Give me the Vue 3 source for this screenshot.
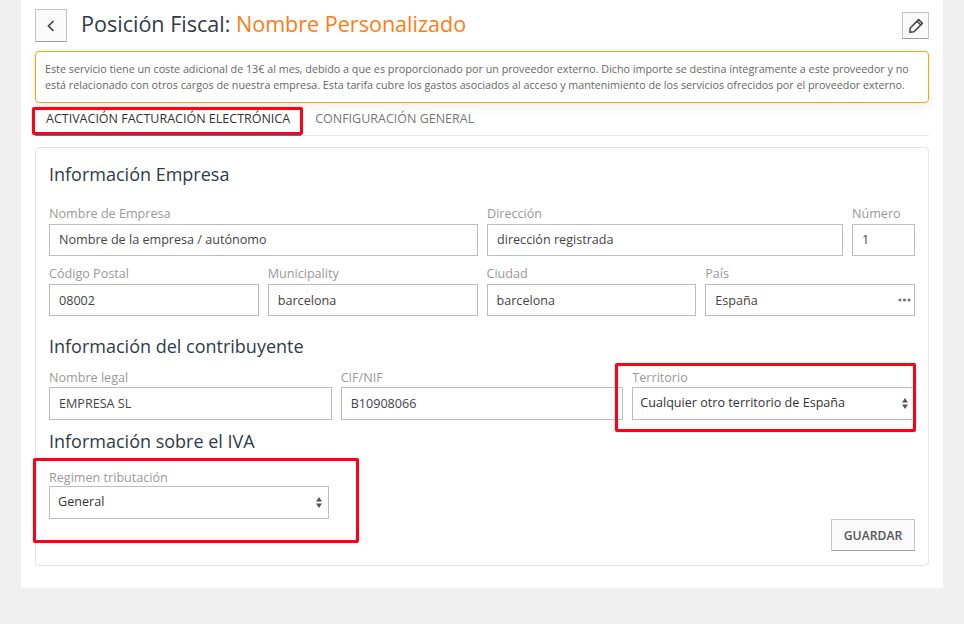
<script setup>
const rows = [
  { cls: 'r1', fields: [
    { label: 'Nombre de Empresa', value: 'Nombre de la empresa / autónomo' },
    { label: 'Dirección', value: 'dirección registrada' },
    { label: 'Número', value: '1' },
  ]},
  { cls: 'r2', fields: [
    { label: 'Código Postal', value: '08002' },
    { label: 'Municipality', value: 'barcelona' },
    { label: 'Ciudad', value: 'barcelona' },
    { label: 'País', value: 'España', dots: true },
  ]},
]
</script>

<template>
  <div class="page">
    <main class="panel">
      <header class="head">
        <button class="btn back" aria-label="Volver">
          <svg width="10" height="14" viewBox="0 0 10 14"><path d="M7.5 2 L2.5 7 L7.5 12" fill="none" stroke="#444" stroke-width="1.7"/></svg>
        </button>
        <h1 class="title">Posición Fiscal: <span class="orange">Nombre Personalizado</span></h1>
        <button class="btn edit" aria-label="Editar">
          <svg width="16" height="16" viewBox="0 0 16 16"><path d="M10.6 1.6 L14.4 5.4 L6 13.8 L1.8 14.2 L2.2 10 Z M9 3.2 L12.8 7" fill="none" stroke="#444" stroke-width="1.5" stroke-linejoin="round"/></svg>
        </button>
      </header>

      <div class="alert">
        Este servicio tiene un coste adicional de 13€ al mes, debido a que es proporcionado por un proveedor externo. Dicho importe se destina íntegramente a este proveedor y no está relacionado con otros cargos de nuestra empresa. Esta tarifa cubre los gastos asociados al acceso y mantenimiento de los servicios ofrecidos por el proveedor externo.
      </div>

      <nav class="tabs">
        <div class="tab active">ACTIVACIÓN FACTURACIÓN ELECTRÓNICA</div>
        <div class="tab">CONFIGURACIÓN GENERAL</div>
        <span class="mark mark-tab"></span>
      </nav>

      <section class="card">
        <h2 class="h first">Información Empresa</h2>
        <div v-for="row in rows" :key="row.cls" class="grid" :class="row.cls">
          <div v-for="f in row.fields" :key="f.label" class="field">
            <label class="lab">{{ f.label }}</label>
            <div class="input">
              <span>{{ f.value }}</span>
              <svg v-if="f.dots" class="dots" width="13" height="4" viewBox="0 0 13 4"><circle cx="2" cy="2" r="1.6" fill="#777"/><circle cx="6.5" cy="2" r="1.6" fill="#777"/><circle cx="11" cy="2" r="1.6" fill="#777"/></svg>
            </div>
          </div>
        </div>

        <h2 class="h second">Información del contribuyente</h2>
        <div class="grid r3">
          <div class="field">
            <label class="lab">Nombre legal</label>
            <div class="input"><span>EMPRESA SL</span></div>
          </div>
          <div class="field">
            <label class="lab">CIF/NIF</label>
            <div class="input"><span>B10908066</span></div>
          </div>
          <div class="field">
            <label class="lab">Territorio</label>
            <div class="input select">
              <span>Cualquier otro territorio de España</span>
              <svg width="6" height="11" viewBox="0 0 6 11"><path d="M3 0 L6 4.5 L0 4.5 Z M3 11 L0 6.5 L6 6.5 Z" fill="#555"/></svg>
            </div>
            <span class="mark mark-terr"></span>
          </div>
        </div>

        <h2 class="h third">Información sobre el IVA</h2>
        <div class="iva field">
          <label class="lab">Regimen tributación</label>
          <div class="input select">
            <span>General</span>
            <svg width="6" height="11" viewBox="0 0 6 11"><path d="M3 0 L6 4.5 L0 4.5 Z M3 11 L0 6.5 L6 6.5 Z" fill="#555"/></svg>
          </div>
          <span class="mark mark-iva"></span>
        </div>

        <div class="actions">
          <button class="btn save">GUARDAR</button>
        </div>
      </section>
    </main>
  </div>
</template>

<style>
html, body { margin: 0; background: #f0f0f0; }
</style>

<style scoped>
.page {
  height: 624px;
  overflow: hidden;
  background: #f0f0f0;
  font-family: "Open Sans", "Liberation Sans", sans-serif;
  color: #333;
}
.panel {
  width: 922px;
  height: 588px;
  margin-left: 21px;
  padding: 0 14px;
  box-sizing: border-box;
  background: #fff;
}
.head {
  height: 51px;
  display: flex;
  align-items: center;
}
.btn {
  display: flex;
  align-items: center;
  justify-content: center;
  padding: 0;
  box-sizing: border-box;
  background: #fafafa;
  border: 1px solid #c4c4c8;
  border-bottom-color: #9a9aa0;
  border-radius: 1px;
  font-family: inherit;
}
.back { width: 32px; height: 33px; }
.edit { width: 27px; height: 27px; margin-left: auto; margin-right: 0; }
.title {
  margin: 0 0 3px 14px;
  font-size: 21.55px;
  font-weight: 400;
  line-height: 28px;
  color: #2f3b48;
}
.orange { color: #ff7c14; }
.alert {
  box-sizing: border-box;
  height: 52px;
  padding: 9px 9px 0;
  border: 1px solid #ffa500;
  border-radius: 4px;
  background: #fff;
  box-shadow: 0 4px 12px rgba(0, 0, 0, .07);
  font-size: 10.76px;
  line-height: 16px;
  color: #666;
}
.tabs {
  position: relative;
  display: flex;
  height: 33px;
  box-sizing: border-box;
  border-bottom: 1px solid #e4e4e4;
}
.tab {
  padding: 7px 11px 0;
  height: 33px;
  box-sizing: border-box;
  font-size: 12.5px;
  line-height: 18px;
  color: #777;
  white-space: nowrap;
}
.tab.active {
  color: #333;
  border-bottom: 1px solid #2f7fd8;
}
.tab + .tab { margin-left: 3px; }
.card {
  position: relative;
  box-sizing: border-box;
  height: 419px;
  margin-top: 11px;
  padding: 0 13px;
  border: 1px solid #e4e4e4;
  border-radius: 4px;
}
.h {
  margin: 0;
  font-size: 18px;
  font-weight: 400;
  line-height: 24px;
  color: #2f3b48;
}
.first { padding-top: 14px; margin-bottom: 18px; }
.second { margin-top: 18px; margin-bottom: 9px; }
.third { margin-top: 9px; margin-bottom: 13px; }
.grid { display: grid; column-gap: 9px; }
.r1 { grid-template-columns: 429fr 356fr 63fr; margin-bottom: 8px; }
.r2 { grid-template-columns: repeat(4, 1fr); }
.r3 { grid-template-columns: repeat(3, 1fr); }
.field { position: relative; min-width: 0; }
.lab {
  display: block;
  height: 20px;
  font-size: 12.6px;
  line-height: 19px;
  color: #999;
  white-space: nowrap;
}
.r3 .lab { line-height: 21px; }
.iva .lab { line-height: 23px; }
.input {
  box-sizing: border-box;
  height: 32px;
  display: flex;
  align-items: center;
  justify-content: space-between;
  padding: 0 3px 0 9px;
  border: 1px solid #bdbdbd;
  font-size: 12.6px;
  color: #444;
  white-space: nowrap;
}
.r1 .input { padding-bottom: 2px; }
.r3 .input, .iva .input { height: 33px; }
.select { color: #333; }
.r3 .select, .iva .select { padding: 0 6px 2px 8px; }
.r3 .select span { margin-left: -1px; }
.iva .select svg, .r3 .select svg { margin-top: 2px; }
.iva { width: 280px; }
.actions {
  position: absolute;
  right: 13px;
  bottom: 14px;
}
.save {
  width: 84px;
  height: 32px;
  font-size: 12.2px;
  font-weight: 600;
  color: #555;
}
.mark {
  position: absolute;
  box-sizing: border-box;
  border: 3px solid #ff0019;
  border-radius: 2px;
  box-shadow: 0 0 1px rgba(255, 0, 25, .6);
  pointer-events: none;
}
.mark-tab { left: -3px; top: 4px; width: 271px; height: 28px; }
.mark-terr { left: -17px; top: -4px; width: 301px; height: 69px; }
.mark-iva { left: -16px; top: -8px; width: 326px; height: 85px; }
</style>
